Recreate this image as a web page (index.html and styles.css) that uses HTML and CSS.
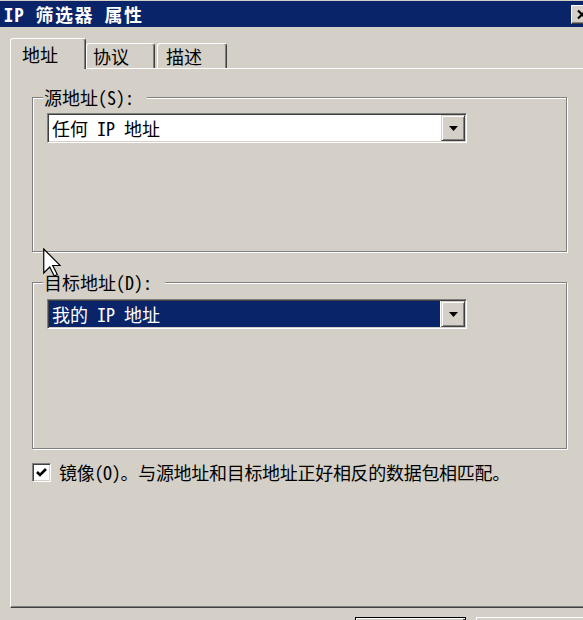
FILE: index.html
```html
<!DOCTYPE html>
<html lang="zh-CN">
<head>
<meta charset="utf-8">
<title>IP 筛选器 属性</title>
<link rel="stylesheet" href="styles.css">
</head>
<body>
<div class="titlebar">
  <div class="title">IP 筛选器 属性</div>
  <div class="close">
    <svg width="12" height="11" viewBox="0 0 12 11"><path d="M2 1.5 L10 9.5 M10 1.5 L2 9.5" stroke="#000" stroke-width="2.2" fill="none"/></svg>
  </div>
</div>
<div class="main">
  <div class="tabs">
    <div class="tab active t1">地址</div>
    <div class="tab t2">协议</div>
    <div class="tab t3">描述</div>
  </div>
  <div class="panel">
    <fieldset class="group g1">
      <legend>源地址(S):</legend>
      <div class="combo">
        <div class="combo-text">任何 IP 地址</div>
        <div class="combo-btn"><svg width="9" height="5" viewBox="0 0 9 5"><polygon points="0,0 9,0 4.5,5" fill="#000"/></svg></div>
      </div>
    </fieldset>
    <fieldset class="group g2">
      <legend>目标地址(D):</legend>
      <div class="combo">
        <div class="combo-text sel">我的 IP 地址</div>
        <div class="combo-btn"><svg width="9" height="5" viewBox="0 0 9 5"><polygon points="0,0 9,0 4.5,5" fill="#000"/></svg></div>
      </div>
    </fieldset>
    <div class="mirror">
      <div class="check"><svg width="17" height="17" viewBox="0 0 17 17"><polyline points="4,8 7,11 13,5" fill="none" stroke="#000" stroke-width="2.6"/></svg></div>
      <span class="mirror-text">镜像(O)。与源地址和目标地址正好相反的数据包相匹配。</span>
    </div>
  </div>
  <div class="footer">
    <div class="btn default"></div>
    <div class="btn"></div>
  </div>
</div>
<svg class="cursor" width="18" height="29" viewBox="0 0 12 19"><path d="M0.5 0.5 L0.5 16.5 L4.5 12.5 L7.5 18.5 L9.5 17.5 L6.5 11.5 L11.5 11.5 Z" fill="#fff" stroke="#000" stroke-width="0.8"/></svg>
</body>
</html>
```
FILE: styles.css
```css
* { box-sizing: border-box; }
html, body { margin: 0; }
body {
  width: 583px;
  height: 620px;
  overflow: hidden;
  position: relative;
  background: #d4d0c8;
  color: #000;
  font-family: "Noto Sans Mono CJK SC", "Noto Sans CJK SC", "DejaVu Sans Mono", monospace;
  font-size: 18px;
  line-height: 20px;
}
.titlebar {
  height: 27px;
  border-top: 1px solid #d4d0c8;
  background: #0a246a;
  display: flex;
  align-items: center;
  justify-content: space-between;
}
.title {
  color: #fff;
  font-weight: bold;
  padding-left: 4px;
  letter-spacing: 1.5px;
  white-space: nowrap;
}
.close {
  width: 22px;
  height: 19px;
  margin-right: -10px;
  background: #d4d0c8;
  border: 1px solid;
  border-color: #fff #404040 #404040 #fff;
  box-shadow: inset -1px -1px #808080;
  display: flex;
  align-items: center;
  justify-content: center;
}
.close svg { display: block; }
.main { padding: 11px 0 0 10px; }
.tabs {
  display: flex;
  align-items: flex-end;
  height: 30px;
  position: relative;
  z-index: 1;
}
.tab {
  height: 25px;
  border: 1px solid #fff;
  border-bottom: none;
  border-right-color: #404040;
  box-shadow: inset -1px 0 #808080;
  border-radius: 3px 3px 0 0;
  background: #d4d0c8;
  display: flex;
  align-items: center;
  white-space: nowrap;
}
.tab.active { height: 31px; margin-bottom: -1px; }
.t1 { width: 76px; padding-left: 11px; }
.t2 { width: 69px; padding-left: 6px; }
.t3 { width: 70px; margin-left: 2px; padding-left: 8px; }
.panel {
  height: 540px;
  margin-right: -20px;
  border-top: 1px solid #fff;
  border-left: 1px solid #fff;
  border-bottom: 1px solid #404040;
  box-shadow: inset 0 -1px #808080;
  padding: 18px 0 0 21px;
}
.group {
  margin: 0;
  width: 535px;
  padding: 6px 0 0 14px;
  border: 1px solid #808080;
  box-shadow: inset 1px 1px #fff, 1px 1px #fff;
}
.group legend {
  margin-left: -4px;
  padding: 0 13px 0 1px;
  background: #d4d0c8;
  line-height: 20px;
}
.g1 { height: 165px; }
.g2 { height: 177px; margin-top: 20px; padding-top: 7px; }
.combo {
  width: 420px;
  height: 30px;
  display: flex;
  padding: 1px;
  background: #fff;
  border: 1px solid;
  border-color: #808080 #fff #fff #808080;
  box-shadow: inset 1px 1px #404040, inset -1px -1px #d4d0c8;
}
.combo-text {
  flex: 1;
  padding-left: 3px;
  display: flex;
  align-items: center;
  white-space: nowrap;
}
.combo-text.sel {
  background: #0a246a;
  color: #fff;
  margin-right: 1px;
}
.combo-btn {
  width: 24px;
  background: #d4d0c8;
  border: 1px solid;
  border-color: #d4d0c8 #404040 #404040 #d4d0c8;
  box-shadow: inset 1px 1px #fff, inset -1px -1px #808080;
  display: flex;
  align-items: center;
  justify-content: center;
}
.combo-btn svg { display: block; }
.mirror {
  display: flex;
  align-items: center;
  gap: 8px;
  margin-top: 13px;
  white-space: nowrap;
}
.mirror-text { letter-spacing: -0.3px; }
.check {
  width: 19px;
  height: 19px;
  flex: none;
  background: #fff;
  border: 1px solid;
  border-color: #808080 #fff #fff #808080;
  box-shadow: inset 1px 1px #404040, inset -1px -1px #d4d0c8;
}
.check svg { display: block; }
.footer {
  display: flex;
  justify-content: flex-end;
  gap: 10px;
  padding-top: 9px;
  margin-right: -4px;
}
.btn {
  width: 111px;
  height: 30px;
  flex: none;
  background: #d4d0c8;
  border: 1px solid;
  border-color: #fff #404040 #404040 #fff;
  box-shadow: inset -1px -1px #808080;
}
.btn.default {
  border-color: #000;
  box-shadow: inset 1px 1px #fff, inset -2px -2px #404040;
}
.cursor {
  position: absolute;
  left: 43px;
  top: 248px;
}
```
